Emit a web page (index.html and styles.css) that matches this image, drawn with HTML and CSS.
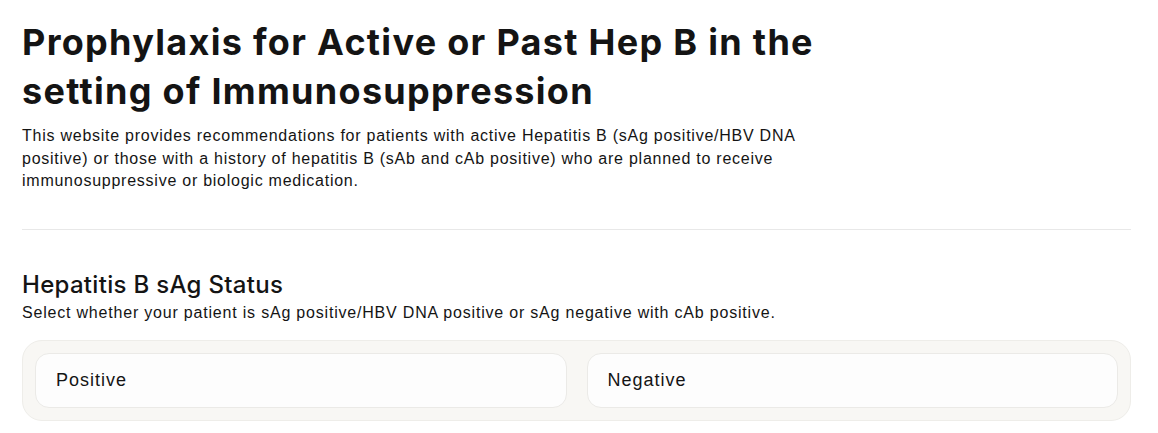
FILE: index.html
```html
<!DOCTYPE html>
<html lang="en">
<head>
    <meta charset="UTF-8">
    <meta name="viewport" content="width=device-width, initial-scale=1.0">
    <title>Hep B Prophylaxis</title>
    <link rel="stylesheet" href="styles.css">
</head>
<body>
    <div class="page">
        <header class="intro">
            <h1>Prophylaxis for Active or Past Hep B in the<br>setting of Immunosuppression</h1>
            <p>This website provides recommendations for patients with active Hepatitis B (sAg positive/HBV DNA<br>positive) or those with a history of hepatitis B (sAb and cAb positive) who are planned to receive<br>immunosuppressive or biologic medication.</p>
        </header>

        <hr class="divider">

        <section class="question">
            <h2>Hepatitis B sAg Status</h2>
            <p class="hint">Select whether your patient is sAg positive/HBV DNA positive or sAg negative with cAb positive.</p>
            <div class="options">
                <button class="option" data-value="positive">Positive</button>
                <button class="option" data-value="negative">Negative</button>
            </div>
        </section>
    </div>
</body>
</html>
```

FILE: styles.css
```css
body {
    margin: 0;
    padding: 0;
    background-color: #fff;
    font-family: "Liberation Sans", Arial, sans-serif;
    color: #141414;
}

.page {
    width: 1109px;
    margin-left: 22px;
    padding-top: 18px;
}

h1 {
    font-family: Inter, "Liberation Sans", sans-serif;
    font-size: 36px;
    font-weight: 700;
    line-height: 49px;
    letter-spacing: 1.3px;
    margin: 0 0 9px 0;
}

.intro p {
    font-size: 16px;
    line-height: 22.5px;
    letter-spacing: 0.75px;
    margin: 0;
}

.divider {
    border: none;
    border-top: 1px solid #e8e8e8;
    margin: 36px 0 40px 0;
}

h2 {
    font-family: Inter, "Liberation Sans", sans-serif;
    font-size: 24px;
    font-weight: 500;
    line-height: 30px;
    letter-spacing: 0.3px;
    margin: 0 0 2px 0;
}

.hint {
    font-size: 16px;
    line-height: 22px;
    letter-spacing: 0.8px;
    margin: 0 0 16px 0;
}

.options {
    display: flex;
    gap: 20px;
    padding: 12px;
    background-color: #f8f7f4; /* warm grey tray behind the choices */
    border: 1px solid #eeede9;
    border-radius: 20px;
}

.option {
    flex: 1;
    height: 55px;
    padding: 0 20px;
    text-align: left;
    font-family: "Liberation Sans", Arial, sans-serif;
    font-size: 18px;
    letter-spacing: 1px;
    color: #141414;
    background-color: #fdfdfd;
    border: 1px solid #ebeae7;
    border-radius: 14px;
    cursor: pointer;
}

.option:hover {
    background-color: #fff;
}
```
